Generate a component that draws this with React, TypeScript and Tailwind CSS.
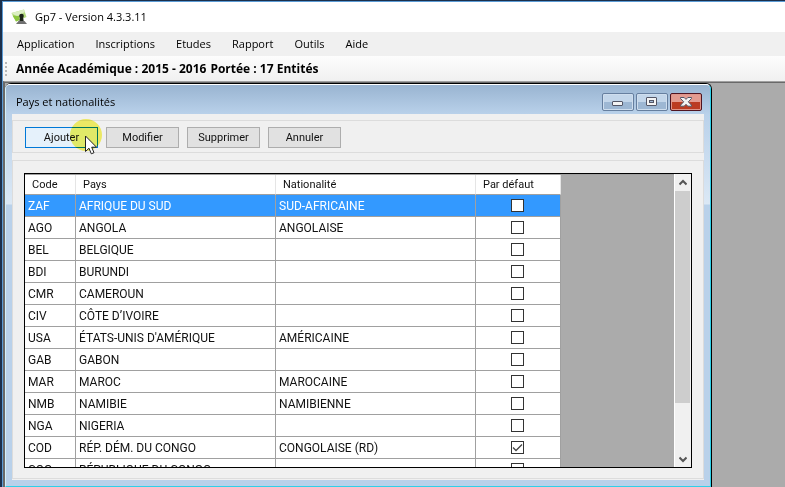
import React from "react";

const COUNTRIES = [
  { code: "ZAF", name: "AFRIQUE DU SUD", nationality: "SUD-AFRICAINE" },
  { code: "AGO", name: "ANGOLA", nationality: "ANGOLAISE" },
  { code: "BEL", name: "BELGIQUE", nationality: "" },
  { code: "BDI", name: "BURUNDI", nationality: "" },
  { code: "CMR", name: "CAMEROUN", nationality: "" },
  { code: "CIV", name: "CÔTE D’IVOIRE", nationality: "" },
  { code: "USA", name: "ÉTATS-UNIS D'AMÉRIQUE", nationality: "AMÉRICAINE" },
  { code: "GAB", name: "GABON", nationality: "" },
  { code: "MAR", name: "MAROC", nationality: "MAROCAINE" },
  { code: "NMB", name: "NAMIBIE", nationality: "NAMIBIENNE" },
  { code: "NGA", name: "NIGERIA", nationality: "" },
  { code: "COD", name: "RÉP. DÉM. DU CONGO", nationality: "CONGOLAISE (RD)", byDefault: true },
  { code: "COG", name: "RÉPUBLIQUE DU CONGO", nationality: "" },
];

const MENUS = ["Application", "Inscriptions", "Etudes", "Rapport", "Outils", "Aide"];

function AppLogo() {
  return (
    <svg className="h-4 w-4" viewBox="0 0 16 16" aria-hidden="true">
      <path d="M0.500 4 L13 0.500 L15.500 8 L5 12.500 Z" fill="#b5dd80" />
      <path d="M0.500 4 L13 0.500 L13.800 3 L6 7.500 Z" fill="#dcefc4" />
      <path d="M1.500 6.500 L8 7 L8 11.300 L5 12.500 Z" fill="#8cc63f" />
      <circle cx="10.500" cy="7" r="2.300" fill="#1c2419" />
      <path d="M9 8 H12 L12.800 12.500 H8.300 Z" fill="#1c2419" />
      <path d="M5 15 L7.500 12 H13.500 L16 15 Z" fill="#707070" />
    </svg>
  );
}

function WindowButtons() {
  const shared = "flex h-[18px] w-8 items-center justify-center rounded-[2px] border";
  const plain =
    "border-[#667f9f] bg-linear-to-b from-[#c3d6ea] from-50% to-[#9db7d3] to-50% shadow-[inset_0_0_0_1px_#cfdeee]";
  return (
    <div className="flex gap-[2px]">
      <button aria-label="Réduire" className={`${shared} ${plain}`}>
        <svg className="h-3 w-3" viewBox="0 0 12 12">
          <rect x="0.500" y="5.500" width="10" height="4" rx="0.500" fill="#f4f4f4" stroke="#535666" />
        </svg>
      </button>
      <button aria-label="Agrandir" className={`${shared} ${plain}`}>
        <svg className="h-3 w-3" viewBox="0 0 12 12">
          <rect x="0.500" y="1.500" width="10" height="8" rx="0.500" fill="#f4f4f4" stroke="#535666" />
          <rect x="3.500" y="4.500" width="4" height="2" fill="#a3bad6" stroke="#535666" />
        </svg>
      </button>
      <button
        aria-label="Fermer"
        className={`${shared} border-[#4f1420] bg-linear-to-b from-[#e39b90] from-50% to-[#bb3b22] to-50% shadow-[inset_0_0_0_1px_#e0958a]`}
      >
        <svg className="h-3 w-3" viewBox="0 0 12 12">
          <path
            d="M0.500 1.500 H4.200 L6 3.400 L7.800 1.500 H11.500 V2.500 L8.300 5.800 L11.500 9.200 V10.200 H7.800 L6 8.300 L4.200 10.200 H0.500 V9.200 L3.700 5.800 L0.500 2.500 Z"
            fill="#f4f4f4"
            stroke="#535666"
          />
        </svg>
      </button>
    </div>
  );
}

function Pointer() {
  return (
    <span className="pointer-events-none absolute -top-2 left-[45px] block">
      <span className="block h-8 w-8 rounded-full bg-[#faf65a] opacity-90 mix-blend-multiply" />
      <svg className="absolute top-4 left-[15px] h-5 w-3" viewBox="0 0 12 20" aria-hidden="true">
        <path
          d="M0.500 1 V16.500 L4 13.200 L6.300 18.800 L9 17.700 L6.700 12.200 H11.500 Z"
          fill="#fff"
          stroke="#222"
        />
      </svg>
    </span>
  );
}

function ActionButton({ label, active = false }: { label: string; active?: boolean }) {
  return (
    <button
      className={`h-[21px] w-[73px] border pt-px text-center leading-[18px] ${
        active ? "border-[#0078d7] bg-[#e5f1fb]" : "border-[#adadad] bg-[#e1e1e1]"
      }`}
    >
      {label}
    </button>
  );
}

function CountryTable() {
  const head =
    "h-5 border-r border-b border-r-[#e5e5e5] border-b-[#a0a0a0] pr-2 pl-[7px] text-left text-[11px] font-normal";
  return (
    <table className="w-[536px] shrink-0 table-fixed border-separate border-spacing-0 self-start bg-white">
      <colgroup>
        <col className="w-[51px]" />
        <col className="w-[200px]" />
        <col className="w-[200px]" />
        <col className="w-[85px]" />
      </colgroup>
      <thead>
        <tr>
          <th className={head}>Code</th>
          <th className={head}>Pays</th>
          <th className={head}>Nationalité</th>
          <th className={head}>Par défaut</th>
        </tr>
      </thead>
      <tbody>
        {COUNTRIES.map((c, i) => {
          const cell = `h-[22px] overflow-hidden whitespace-nowrap border-r border-b border-[#a0a0a0] px-[3px] text-[12px] ${
            i === 0 ? "bg-[#3399ff] text-white" : ""
          }`;
          return (
            <tr key={c.code}>
              <td className={cell}>{c.code}</td>
              <td className={cell}>{c.name}</td>
              <td className={cell}>{c.nationality}</td>
              <td className={`${cell} pr-1`}>
                <label className="relative mx-auto block h-[13px] w-[13px]">
                  <input
                    type="checkbox"
                    defaultChecked={c.byDefault}
                    aria-label={`${c.name} par défaut`}
                    className="peer block h-[13px] w-[13px] appearance-none border border-[#333] bg-white"
                  />
                  <svg
                    className="pointer-events-none absolute inset-0 hidden h-[13px] w-[13px] peer-checked:block"
                    viewBox="0 0 13 13"
                  >
                    <path d="M2 6.500 L5 9.500 L11 3.500" fill="none" stroke="#444" strokeWidth="1.300" />
                  </svg>
                </label>
              </td>
            </tr>
          );
        })}
      </tbody>
    </table>
  );
}

function ScrollBar() {
  return (
    <div className="ml-auto flex w-[17px] shrink-0 flex-col border-l border-white bg-[#f0f0f0]">
      <button aria-label="Défiler vers le haut" className="flex h-[17px] items-center justify-center">
        <svg className="h-2 w-2" viewBox="0 0 8 8">
          <path d="M0.500 5.500 L4 2 L7.500 5.500" fill="none" stroke="#555" strokeWidth="2" />
        </svg>
      </button>
      <div className="min-h-0 flex-1">
        <div className="mr-px h-[82%] bg-[#cdcdcd]" />
      </div>
      <button aria-label="Défiler vers le bas" className="flex h-[17px] items-center justify-center">
        <svg className="h-2 w-2" viewBox="0 0 8 8">
          <path d="M0.500 2.500 L4 6 L7.500 2.500" fill="none" stroke="#555" strokeWidth="2" />
        </svg>
      </button>
    </div>
  );
}

function CountriesWindow() {
  return (
    <section className="mr-[73px] flex min-h-0 flex-1 flex-col rounded-t-md border-t border-r border-black bg-[#b9d1ea]">
      <div className="flex min-h-0 flex-1 flex-col rounded-t-[5px] border-t border-r border-b border-l border-t-white border-r-[#2fd0e8] border-b-[#2fd0e8] border-l-[#d5f0f8] bg-[linear-gradient(to_bottom,#b9d1ea_29px,#dbe8f5_119px,#b9d1ea_120px)]">
        <header className="flex h-[29px] shrink-0 items-center justify-between rounded-t bg-linear-to-b from-[#99b4d1] to-[#b9d1ea] pt-1 pr-2 pl-[10px]">
          <h1 className="pt-px font-['Open_Sans','Noto_Sans',sans-serif] text-[11px] leading-4">Pays et nationalités</h1>
          <WindowButtons />
        </header>
        <div className="mx-[6px] mb-[6px] flex min-h-0 flex-1 flex-col gap-[7px] bg-[#f0f0f0] pt-[6px] pb-px font-['Roboto','Liberation_Sans',sans-serif] text-[11px] leading-4 text-[#111]">
          <div className="flex h-[33px] shrink-0 items-start gap-2 border border-[#dcdcdc] px-3 pt-[6px]">
            <div className="relative flex">
              <ActionButton label="Ajouter" active />
              <Pointer />
            </div>
            <ActionButton label="Modifier" />
            <ActionButton label="Supprimer" />
            <ActionButton label="Annuler" />
          </div>
          <div className="flex min-h-0 flex-1 flex-col border border-[#dcdcdc] px-[11px] pt-3 pb-[10px]">
            <div className="flex min-h-0 flex-1 overflow-hidden border border-black bg-[#ababab]">
              <div className="flex min-h-0 flex-1 overflow-hidden border-t border-[#a0a0a0]">
                <CountryTable />
              </div>
              <ScrollBar />
            </div>
          </div>
        </div>
      </div>
    </section>
  );
}

export default function App() {
  return (
    <div className="flex h-screen flex-col border-t border-l-2 border-[#1b2f4b] font-['Open_Sans','Noto_Sans',sans-serif] text-[11px] text-black">
      <div className="flex min-h-0 flex-1 flex-col border-t border-l border-[#5b9bd5] bg-[#f0f0f0]">
        <header className="flex h-[30px] shrink-0 items-center gap-2 bg-white pl-2">
          <AppLogo />
          <span className="leading-4">Gp7 - Version 4.3.3.11</span>
        </header>
        <nav className="flex h-6 shrink-0 items-center gap-[21px] pl-[14px]">
          {MENUS.map((m) => (
            <button key={m} className="leading-4">
              {m}
            </button>
          ))}
        </nav>
        <div className="flex h-[25px] shrink-0 items-center bg-linear-to-b from-[#fdfdfd] to-[#f0f0f0] pl-[2px] text-[12px] font-bold">
          <span className="mr-[9px] h-[14px] w-[2px] bg-[repeating-linear-gradient(to_bottom,#b8b8b8_0_2px,transparent_2px_4px)]" />
          <span className="mr-1 leading-4">Année Académique : 2015 - 2016</span>
          <span className="leading-4">Portée : 17 Entités</span>
        </div>
        <main className="flex min-h-0 flex-1 flex-col border-t border-l-2 border-t-[#a0a0a0] border-l-[#696969] bg-[#ababab]">
          <div className="h-px shrink-0 bg-[#696969]" />
          <CountriesWindow />
        </main>
      </div>
    </div>
  );
}
